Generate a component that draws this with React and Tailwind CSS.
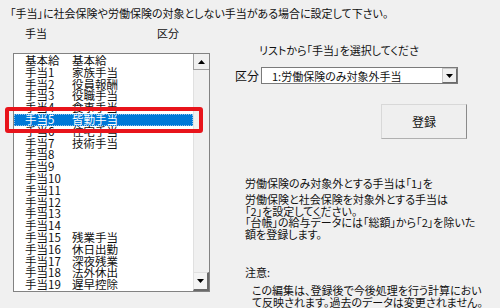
import React from 'react';

const rows = [
  ['基本給', '基本給'],
  ['手当1', '家族手当'],
  ['手当2', '役員報酬'],
  ['手当3', '役職手当'],
  ['手当4', '食事手当'],
  ['手当5', '皆勤手当'],
  ['手当6', '住宅手当'],
  ['手当7', '技術手当'],
  ['手当8', ''],
  ['手当9', ''],
  ['手当10', ''],
  ['手当11', ''],
  ['手当12', ''],
  ['手当13', ''],
  ['手当14', ''],
  ['手当15', '残業手当'],
  ['手当16', '休日出勤'],
  ['手当17', '深夜残業'],
  ['手当18', '法外休出'],
  ['手当19', '遅早控除'],
];

export default function App() {
  return (
    <div className="w-[500px] h-[308px] overflow-hidden bg-[#f0f0f0] text-[#111] font-['Noto_Sans_CJK_JP',sans-serif] [font-feature-settings:'palt']">
      <p className="pl-[10px] pt-[6px] text-[11px] leading-[14px]">
        「手当」に社会保険や労働保険の対象としない手当がある場合に設定して下さい。
      </p>

      <div className="flex mt-[6px]">
        {/* left: list */}
        <div className="ml-[13px] w-[197px]">
          <div className="flex h-[14px] text-[11px] leading-[14px]">
            <span className="pl-[12px] w-[144px]">手当</span>
            <span>区分</span>
          </div>
          <div className="relative mt-[13px] h-[239px] border border-[#828282] bg-white flex">
            <div className="flex-1 pt-[1px] text-[11.5px] leading-[11.8px]">
              {rows.map((r, i) => (
                <div
                  key={i}
                  className={`flex h-[11.8px] ${i === 5 ? 'bg-[#0078d7] text-white outline-1 outline-dotted outline-[#8cc4f0] -outline-offset-1' : ''}`}
                >
                  <span className="pl-[11px] w-[58px]">{r[0]}</span>
                  <span>{r[1]}</span>
                </div>
              ))}
            </div>
            <div className="w-[16px] flex flex-col bg-[#f0f0f0]">
              <div className="h-[16px] border-l border-b border-[#a0a0a0] flex items-center justify-center">
                <svg width="7" height="4" viewBox="0 0 7 4"><path d="M3.5 0L7 4H0z" fill="#000" /></svg>
              </div>
              <div className="flex-1 border-l border-[#e0e0e0]" />
              <div className="h-[19px] border-l border-t border-[#e0e0e0] border-r-2 border-b-2 border-r-[#6a6a6a] border-b-[#6a6a6a] flex items-center justify-center bg-[#f4f4f4]">
                <svg width="7" height="4" viewBox="0 0 7 4"><path d="M0 0H7L3.5 4z" fill="#000" /></svg>
              </div>
            </div>
            <div className="absolute left-[-9px] top-[53px] w-[198px] h-[26px] border-[4px] border-[#e8141b] rounded-[3px]" />
          </div>
        </div>

        {/* right */}
        <div className="ml-[25px] flex flex-col text-[11px]">
          <p className="mt-[17px] ml-[24px] leading-[14px]">リストから「手当」を選択してくださ</p>
          <div className="mt-[10px] flex items-center">
            <span className="w-[26px] leading-[14px] text-[12px]">区分</span>
            <div className="w-[197px] h-[17px] border border-[#7a7a7a] bg-white flex items-center">
              <span className="flex-1 pl-[10px] leading-[14px]">1:労働保険のみ対象外手当</span>
              <div className="w-[15px] h-[15px] bg-[#f0f0f0] border border-[#c8c8c8] border-r-[#6a6a6a] border-b-[#6a6a6a] flex items-center justify-center">
                <svg width="7" height="4" viewBox="0 0 7 4"><path d="M0 0H7L3.5 4z" fill="#000" /></svg>
              </div>
            </div>
          </div>
          <div className="mt-[20px] ml-[146px] w-[86px] h-[35px] bg-[#efefef] border border-[#d8d8d8] border-r-[#8a8a8a] border-b-[#b0b0b0] flex items-center justify-center text-[12px]">
            登録
          </div>
          <p className="mt-[37px] ml-[10px] leading-[14px]">労働保険のみ対象外とする手当は「1」を</p>
          <p className="mt-[4px] ml-[10px] leading-[11.7px]">
            労働保険と社会保険を対象外とする手当は
            <br />
            「2」を設定してください。
            <br />
            「台帳」の給与データには「総額」から「2」を除いた
            <br />
            額を登録します。
          </p>
          <p className="mt-[24px] ml-[10px] leading-[14px]">注意:</p>
          <p className="mt-[5px] ml-[17px] leading-[12px] whitespace-nowrap">
            この編集は、登録後で今後処理を行う計算におい
            <br />
            て反映されます。過去のデータは変更されません。
          </p>
        </div>
      </div>
    </div>
  );
}
